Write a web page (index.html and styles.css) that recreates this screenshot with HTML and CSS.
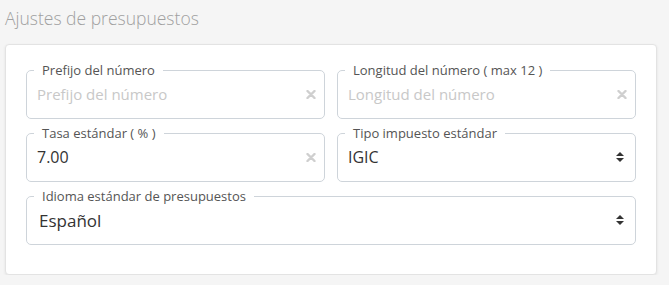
FILE: index.html
```html
<!DOCTYPE html>
<html>
<head>
    <title>Ajustes de presupuestos</title>
    <link rel="stylesheet" href="styles.css">
</head>
<body>
    <h1 class="page-title">Ajustes de presupuestos</h1>
    <div class="card">
        <div class="form-grid">
            <fieldset class="field">
                <legend>Prefijo del número</legend>
                <div class="field-body">
                    <input type="text" placeholder="Prefijo del número">
                    <svg class="clear" width="10" height="9" viewBox="0 0 10 9">
                        <path d="M1.5 1 L8.5 8 M8.5 1 L1.5 8" stroke="#cfcfcf" stroke-width="2.4" stroke-linecap="round"/>
                    </svg>
                </div>
            </fieldset>
            <fieldset class="field">
                <legend>Longitud del número ( max 12 )</legend>
                <div class="field-body">
                    <input type="text" placeholder="Longitud del número">
                    <svg class="clear" width="10" height="9" viewBox="0 0 10 9">
                        <path d="M1.5 1 L8.5 8 M8.5 1 L1.5 8" stroke="#cfcfcf" stroke-width="2.4" stroke-linecap="round"/>
                    </svg>
                </div>
            </fieldset>
            <fieldset class="field">
                <legend>Tasa estándar ( % )</legend>
                <div class="field-body">
                    <input type="text" value="7.00">
                    <svg class="clear" width="10" height="9" viewBox="0 0 10 9">
                        <path d="M1.5 1 L8.5 8 M8.5 1 L1.5 8" stroke="#cfcfcf" stroke-width="2.4" stroke-linecap="round"/>
                    </svg>
                </div>
            </fieldset>
            <fieldset class="field">
                <legend>Tipo impuesto estándar</legend>
                <div class="field-body">
                    <span class="value">IGIC</span>
                    <svg class="arrows" width="8" height="10" viewBox="0 0 8 10">
                        <path d="M4 0 L8 4 H0 Z M4 10 L8 6 H0 Z" fill="#333"/>
                    </svg>
                </div>
            </fieldset>
            <fieldset class="field wide">
                <legend>Idioma estándar de presupuestos</legend>
                <div class="field-body">
                    <span class="value big">Español</span>
                    <svg class="arrows" width="8" height="10" viewBox="0 0 8 10">
                        <path d="M4 0 L8 4 H0 Z M4 10 L8 6 H0 Z" fill="#333"/>
                    </svg>
                </div>
            </fieldset>
        </div>
    </div>
</body>
</html>
```

FILE: styles.css
```css
body {
    margin: 0;
    background-color: #f5f5f5;
    font-family: "Open Sans", Arial, sans-serif;
    color: #333;
}
.page-title {
    margin: 0;
    padding: 5px 5px 0;
    height: 39px;
    box-sizing: border-box;
    font-size: 17.5px;
    font-weight: 300;
    color: #a0a0a0;
    line-height: 27px;
}
.card {
    margin: 5px 12px 0 5px;
    padding: 17px 20px 29px;
    background-color: white;
    border: 1px solid #e3e3e3;
    border-radius: 4px;
    box-shadow: 0 1px 3px rgba(0,0,0,0.08);
}
.form-grid {
    display: grid;
    grid-template-columns: 1fr 1fr;
    gap: 6px 12px;
}
.field {
    margin: 0;
    padding: 0 8px 0 7px;
    border: 1px solid #ced4da;
    border-radius: 5px;
    min-width: 0;
}
.field.wide {
    grid-column: 1 / 3;
}
.field legend {
    padding: 0 8px;
    font-size: 13px;
    line-height: 16px;
    color: #555;
}
.field-body {
    display: flex;
    align-items: center;
    height: 48px;
    margin-top: -8px;
    padding-left: 3px;
}
.field-body input {
    flex: 1;
    min-width: 0;
    border: none;
    outline: none;
    padding: 0;
    font-family: inherit;
    font-size: 16px;
    color: #333;
    background: transparent;
}
.field-body input::placeholder {
    color: #c8c8c8;
    font-size: 15px;
}
.value {
    flex: 1;
    font-size: 16px;
    color: #333;
}
.value.big {
    font-size: 17px;
    margin-left: 2px;
}
.arrows {
    margin-right: 3px;
}
```
